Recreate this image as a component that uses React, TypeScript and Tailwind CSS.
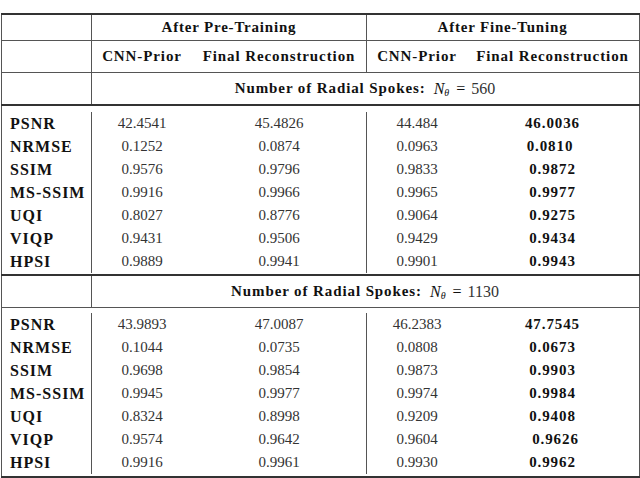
import React from "react";

const serif = { fontFamily: '"Liberation Serif", "Times New Roman", serif' };

const cols = "grid grid-cols-[90px_100px_175px_100px_171px]";

type Row = { label: string; v: [string, string, string, string]; nudge?: string };

const block560: Row[] = [
  { label: "PSNR", v: ["42.4541", "45.4826", "44.484", "46.0036"] },
  { label: "NRMSE", v: ["0.1252", "0.0874", "0.0963", "0.0810"], nudge: "pr-[5px]" },
  { label: "SSIM", v: ["0.9576", "0.9796", "0.9833", "0.9872"] },
  { label: "MS-SSIM", v: ["0.9916", "0.9966", "0.9965", "0.9977"] },
  { label: "UQI", v: ["0.8027", "0.8776", "0.9064", "0.9275"] },
  { label: "VIQP", v: ["0.9431", "0.9506", "0.9429", "0.9434"] },
  { label: "HPSI", v: ["0.9889", "0.9941", "0.9901", "0.9943"] },
];

const block1130: Row[] = [
  { label: "PSNR", v: ["43.9893", "47.0087", "46.2383", "47.7545"] },
  { label: "NRMSE", v: ["0.1044", "0.0735", "0.0808", "0.0673"] },
  { label: "SSIM", v: ["0.9698", "0.9854", "0.9873", "0.9903"] },
  { label: "MS-SSIM", v: ["0.9945", "0.9977", "0.9974", "0.9984"] },
  { label: "UQI", v: ["0.8324", "0.8998", "0.9209", "0.9408"] },
  { label: "VIQP", v: ["0.9574", "0.9642", "0.9604", "0.9626"], nudge: "pl-[6px]" },
  { label: "HPSI", v: ["0.9916", "0.9961", "0.9930", "0.9962"] },
];

const HLine = ({ thick }: { thick?: boolean }) => (
  <div className={thick ? "h-[2px] bg-[#333]" : "h-px bg-[#555]"} />
);

const SpokesRow = ({ n }: { n: string }) => (
  <div className={`${cols} h-[31px] border-x border-[#555]`}>
    <div className="border-r border-[#555]" />
    <div className="col-span-4 flex items-center justify-center text-[15px] text-[#111]">
      <span className="font-bold tracking-[0.9px]">Number of Radial Spokes:</span>
      <span className="ml-[8px] italic text-[16px]">N</span>
      <span className="text-[10px] italic mt-[7px]">θ</span>
      <span className="ml-[7px] text-[16px]">=</span>
      <span className="ml-[6px] text-[16px] text-[#333]">{n}</span>
    </div>
  </div>
);

const DataBlock = ({ rows, top, bottom }: { rows: Row[]; top: string; bottom: string }) => (
  <div className={`${cols} border-x border-[#555] ${top} ${bottom}`}>
    {rows.map((r) => (
      <React.Fragment key={r.label}>
        <div className="h-[23px] flex items-center pl-[8px] border-r border-[#555] font-bold text-[16px] tracking-[1px] text-[#111]">
          {r.label}
        </div>
        <div className="h-[23px] flex items-center justify-center text-[15px] text-[#333]">{r.v[0]}</div>
        <div className="h-[23px] flex items-center justify-center text-[15px] text-[#333] border-r border-[#555]">
          {r.v[1]}
        </div>
        <div className="h-[23px] flex items-center justify-center text-[15px] text-[#333]">{r.v[2]}</div>
        <div
          className={`h-[23px] flex items-center justify-center text-[15px] font-bold tracking-[0.9px] text-[#111] ${r.nudge ?? ""}`}
        >
          {r.v[3]}
        </div>
      </React.Fragment>
    ))}
  </div>
);

export default function App() {
  return (
    <div className="w-[640px] h-[478px] bg-white overflow-hidden" style={serif}>
      <div className="pt-[13px] pl-[1px] w-[640px]">
        <HLine thick />
        {/* header: training stages */}
        <div className={`${cols} h-[25px] border-x border-[#555] text-[15px] font-bold tracking-[0.8px] text-[#111]`}>
          <div className="border-r border-[#555]" />
          <div className="col-span-2 flex items-center justify-center border-r border-[#555]">After Pre-Training</div>
          <div className="col-span-2 flex items-center justify-center">After Fine-Tuning</div>
        </div>
        <HLine />
        {/* header: outputs */}
        <div className={`${cols} h-[31px] border-x border-[#555] text-[15px] font-bold tracking-[0.9px] text-[#111]`}>
          <div className="border-r border-[#555]" />
          <div className="flex items-center justify-center">CNN-Prior</div>
          <div className="flex items-center justify-center border-r border-[#555]">Final Reconstruction</div>
          <div className="flex items-center justify-center">CNN-Prior</div>
          <div className="flex items-center justify-center">Final Reconstruction</div>
        </div>
        <HLine />
        <SpokesRow n="560" />
        <HLine thick />
        <DataBlock rows={block560} top="pt-[6px]" bottom="pb-px" />
        <HLine thick />
        <SpokesRow n="1130" />
        <HLine />
        <DataBlock rows={block1130} top="pt-[5px]" bottom="pb-[2px]" />
        <HLine thick />
      </div>
    </div>
  );
}
